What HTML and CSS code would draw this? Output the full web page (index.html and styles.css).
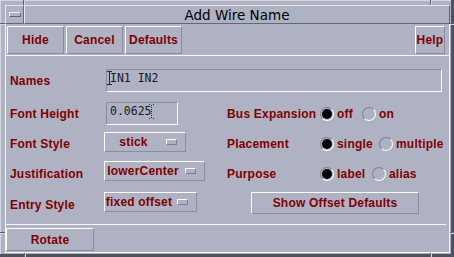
FILE: index.html
```html
<!DOCTYPE html>
<html>
<head>
<meta charset="utf-8">
<title>Add Wire Name</title>
<link rel="stylesheet" href="styles.css">
</head>
<body>
<div class="window">
  <span class="tick tv t-top1"></span>
  <span class="tick tv t-top2"></span>
  <span class="tick tv t-bot1"></span>
  <span class="tick tv t-bot2"></span>
  <span class="tick th t-left1"></span>
  <span class="tick th t-left2"></span>
  <span class="tick th t-right1"></span>
  <span class="tick th t-right2"></span>

  <div class="titlebar">
    <div class="menu-btn"><span class="menu-dash"></span></div>
    <div class="title">Add Wire Name</div>
  </div>

  <div class="client">
    <div class="toolbar">
      <div class="btn tb">Hide</div>
      <div class="btn tb">Cancel</div>
      <div class="btn tb">Defaults</div>
      <div class="btn help">Help</div>
    </div>

    <div class="form">
      <div class="row r-a">
        <div class="lab lab1">Names</div>
        <div class="field names-field"><svg class="ibeam" width="5" height="14" viewBox="0 0 5 14"><rect x="0" y="0" width="5" height="1" fill="#2a2a2a"/><rect x="2" y="0" width="1" height="14" fill="#2a2a2a"/><rect x="0" y="13" width="5" height="1" fill="#2a2a2a"/></svg>IN1 IN2</div>
      </div>

      <div class="row r-b">
        <div class="lab lab1">Font Height</div>
        <div class="c1"><div class="field fh-field">0.0625<svg class="dcursor" width="5" height="15" viewBox="0 0 5 15"><rect x="0" y="0" width="1" height="1" fill="#2a2a2a"/><rect x="2" y="1" width="1" height="1" fill="#2a2a2a"/><rect x="4" y="0" width="1" height="1" fill="#2a2a2a"/><rect x="2" y="3" width="1" height="1" fill="#2a2a2a"/><rect x="2" y="5" width="1" height="1" fill="#2a2a2a"/><rect x="2" y="7" width="1" height="1" fill="#2a2a2a"/><rect x="2" y="9" width="1" height="1" fill="#2a2a2a"/><rect x="2" y="11" width="1" height="1" fill="#2a2a2a"/><rect x="2" y="13" width="1" height="1" fill="#2a2a2a"/><rect x="0" y="14" width="1" height="1" fill="#2a2a2a"/><rect x="4" y="14" width="1" height="1" fill="#2a2a2a"/></svg></div></div>
        <div class="lab lab2">Bus Expansion</div>
        <div class="radios bus">
          <div class="ropt"><span class="radio on"></span><span>off</span></div>
          <div class="ropt"><span class="radio"></span><span>on</span></div>
        </div>
      </div>

      <div class="row r-c">
        <div class="lab lab1">Font Style</div>
        <div class="c1"><div class="opt w-stick"><span class="opt-text">stick</span><span class="opt-ind"></span></div></div>
        <div class="lab lab2">Placement</div>
        <div class="radios place">
          <div class="ropt"><span class="radio on"></span><span>single</span></div>
          <div class="ropt"><span class="radio"></span><span>multiple</span></div>
        </div>
      </div>

      <div class="row r-d">
        <div class="lab lab1">Justification</div>
        <div class="c1"><div class="opt w-just"><span class="opt-text">lowerCenter</span><span class="opt-ind"></span></div></div>
        <div class="lab lab2">Purpose</div>
        <div class="radios purp">
          <div class="ropt"><span class="radio on"></span><span>label</span></div>
          <div class="ropt"><span class="radio"></span><span>alias</span></div>
        </div>
      </div>

      <div class="row r-e">
        <div class="lab lab1">Entry Style</div>
        <div class="c1"><div class="opt w-entry"><span class="opt-text">fixed offset</span><span class="opt-ind"></span></div></div>
        <div class="btn sod">Show Offset Defaults</div>
      </div>
    </div>

    <div class="bottombar">
      <div class="btn rotate">Rotate</div>
    </div>
  </div>
</div>
</body>
</html>
```

FILE: styles.css
```css
* { box-sizing: border-box; }
html, body { margin: 0; padding: 0; }
body {
  background: #aeb2c3;
  font-family: "Liberation Sans", Arial, sans-serif;
  font-size: 12px;
}

.window {
  position: relative;
  width: 454px;
  height: 257px;
  padding: 5px 1px 1px 5px;
  border-right: 3px solid #4f525d;
  border-bottom: 3px solid #4f525d;
  background: #aeb2c3;
  box-shadow: inset 1px 1px 0 #d3d6df;
  display: flex;
  flex-direction: column;
}

/* frame resize ticks */
.tick { position: absolute; background: #5d6170; }
.tv { width: 1px; height: 5px; box-shadow: 1px 0 0 #d3d6df; }
.th { width: 5px; height: 1px; box-shadow: 0 1px 0 #d3d6df; }
.t-top1 { left: 23px; top: 0; }
.t-top2 { left: 430px; top: 0; }
.t-bot1 { left: 24px; top: 253px; height: 4px; }
.t-bot2 { left: 430px; top: 253px; height: 4px; }
.t-left1 { left: 0; top: 23px; }
.t-left2 { left: 0; top: 232px; }
.t-right1 { left: 450px; top: 23px; width: 4px; }
.t-right2 { left: 450px; top: 232px; width: 4px; }

/* title bar */
.titlebar { display: flex; height: 19px; }
.menu-btn {
  width: 19px;
  height: 19px;
  border: 1px solid;
  border-color: #e6e8ee #636776 #636776 #e6e8ee;
  display: flex;
  align-items: center;
  justify-content: center;
}
.menu-dash {
  width: 12px;
  height: 5px;
  margin-left: 1px;
  border: 1px solid;
  border-color: #eef0f4 #5e6270 #5e6270 #eef0f4;
}
.title {
  flex: 1;
  height: 19px;
  border-top: 1px solid #e6e8ee;
  border-left: 1px solid #e6e8ee;
  border-right: 1px solid #636776;
  border-bottom: 1px solid #636776;
  padding-top: 1px;
  font-family: "DejaVu Sans", sans-serif;
  font-size: 13.5px;
  line-height: 16px;
  text-align: center;
  color: #000;
}

/* client area */
.client {
  flex: 1;
  display: flex;
  flex-direction: column;
  border-left: 1px solid #f4f5f8;
  border-right: 1px solid #f4f5f8;
  border-bottom: 1px solid #f4f5f8;
}

.btn {
  height: 28px;
  border: 1px solid;
  border-color: #ffffff #8a8d9a #8a8d9a #ffffff;
  color: #800000;
  font-weight: bold;
  letter-spacing: 0.2px;
  line-height: 14px;
  display: flex;
  align-items: center;
  justify-content: center;
  white-space: nowrap;
}

.toolbar {
  display: flex;
  gap: 2px;
  padding: 2px 4px 1px 1px;
  border-bottom: 1px solid #f4f5f8;
}
.tb { width: 57px; }
.help { width: 30px; margin-left: auto; }

.form { flex: 1; padding-left: 4px; }
.row { display: flex; align-items: flex-start; }
.r-a { margin-top: 13px; height: 23px; }
.r-b { margin-top: 10px; height: 23px; }
.r-c { margin-top: 7px; height: 20px; }
.r-d { margin-top: 9px; height: 20px; }
.r-e { margin-top: 11px; height: 22px; }

.lab {
  color: #800000;
  font-weight: bold;
  letter-spacing: 0.2px;
  line-height: 14px;
  white-space: nowrap;
}
.lab1 { width: 94px; }
.lab2 { width: 93px; }
.c1 { width: 123px; }
.r-a .lab, .r-b .lab, .r-c .lab { margin-top: 5px; }
.r-d .lab, .r-e .lab { margin-top: 6px; }

.field {
  position: relative;
  height: 23px;
  margin-left: 2px;
  border: 1px solid;
  border-color: #8a8d9a #ffffff #ffffff #8a8d9a;
  padding: 1px 0 0 3px;
  font-family: "DejaVu Sans Mono", monospace;
  font-size: 11.5px;
  line-height: 14px;
  color: #1a1a1a;
  white-space: pre;
}
.names-field { width: 336px; }
.fh-field { width: 72px; }
.ibeam { position: absolute; left: 0; top: 1px; }
.dcursor { position: absolute; left: 42px; top: 1px; }

.opt {
  height: 20px;
  border: 1px solid;
  border-color: #ffffff #8a8d9a #8a8d9a #ffffff;
  display: flex;
  align-items: center;
  color: #800000;
  font-weight: bold;
  letter-spacing: 0.2px;
  line-height: 14px;
  white-space: nowrap;
}
.opt-text { flex: 1; text-align: center; }
.opt-ind {
  width: 11px;
  height: 6px;
  margin: 0 8px 0 4px;
  border: 1px solid;
  border-color: #ffffff #7b7f8c #7b7f8c #ffffff;
}
.w-stick { width: 82px; }
.w-just { width: 101px; }
.w-entry { width: 93px; }

.radios {
  display: flex;
  align-items: center;
  color: #800000;
  font-weight: bold;
  letter-spacing: 0.2px;
  line-height: 14px;
  white-space: nowrap;
}
.r-b .radios, .r-c .radios { margin-top: 5px; }
.r-d .radios { margin-top: 6px; }
.ropt { display: flex; align-items: center; gap: 3px; }
.bus .ropt:first-child { width: 42px; }
.place .ropt:first-child { width: 59px; }
.purp .ropt:first-child { width: 52px; }
.radio {
  width: 14px;
  height: 14px;
  border-radius: 50%;
  border: 1px solid;
  border-color: #7e8291 #ffffff #ffffff #7e8291;
  display: flex;
  align-items: center;
  justify-content: center;
}
.radio.on::after {
  content: "";
  width: 10px;
  height: 10px;
  border-radius: 50%;
  background: #000;
}

.sod { width: 168px; height: 22px; margin-left: 24px; }

.bottombar {
  margin-right: 3px;
  padding: 3px 0 1px 0;
  border-top: 1px solid #f4f5f8;
}
.rotate { width: 88px; height: 23px; }
```
